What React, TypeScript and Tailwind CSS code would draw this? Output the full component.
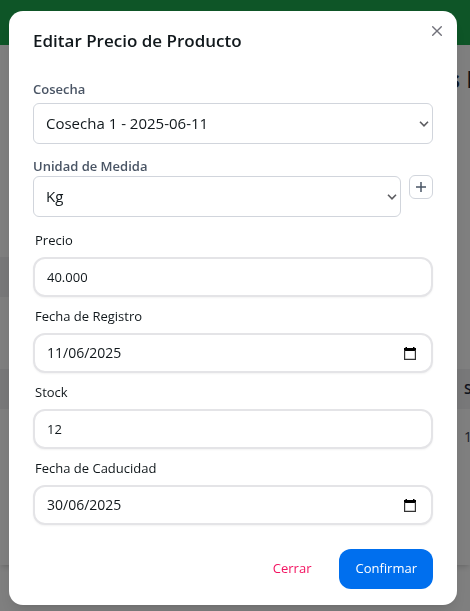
import { useState, type ReactNode } from "react";

const fieldBox =
  "flex h-10 items-center rounded-xl border-2 border-[#e4e4e7] bg-white px-3 shadow-xs";
const selectLabel = "block text-[13px] leading-5 font-semibold text-[#4a5565]";

function CalendarIcon() {
  return (
    <svg width="12" height="13" viewBox="0 0 12 13" aria-hidden="true">
      <path fill="#000" d="M1.5 0h1.5v1h6V0h1.5v1H12v3H0V1h1.5z" />
      <path fill="none" stroke="#333" strokeWidth="1.2" d="M.6 3v9.4h10.8V3" />
    </svg>
  );
}

type SelectBoxProps = { id: string; children: ReactNode };

function SelectBox({ id, children }: SelectBoxProps) {
  return (
    <div className="relative">
      <select
        id={id}
        className="block h-[41px] w-full appearance-none rounded-md border border-[#d1d5dc] bg-white py-2 pr-6 pl-3 text-[15px] text-[#11181c]"
      >
        {children}
      </select>
      <svg
        width="10"
        height="6"
        viewBox="0 0 10 6"
        fill="none"
        stroke="#5c5c60"
        strokeWidth="1.6"
        className="pointer-events-none absolute top-[18px] right-1"
        aria-hidden="true"
      >
        <path d="M1 .8l4 4 4-4" />
      </svg>
    </div>
  );
}

type FieldProps = { id: string; label: string; initial: string; date?: boolean };

function Field({ id, label, initial, date = false }: FieldProps) {
  const [value, setValue] = useState(initial);
  return (
    <div>
      <label htmlFor={id} className="block h-7 pl-0.5 text-[13px] leading-[22px] text-[#11181c]">
        {label}
      </label>
      <div className={fieldBox}>
        <input
          id={id}
          type="text"
          inputMode="numeric"
          value={value}
          onChange={(e) => setValue(e.target.value)}
          className={`w-full min-w-0 bg-transparent leading-5 text-[#11181c] outline-none ${date ? "text-sm" : "text-[13px]"}`}
        />
        {date && (
          <button type="button" aria-label={`Abrir calendario: ${label}`} className="mr-[3px] shrink-0">
            <CalendarIcon />
          </button>
        )}
      </div>
    </div>
  );
}

function PageBehind() {
  return (
    <div aria-hidden="true" className="min-h-screen overflow-hidden bg-white">
      <div className="h-[45px] bg-[#1caa4e]" />
      <div className="h-[520px] bg-white shadow-md">
        <div className="flex h-[212px] justify-end overflow-hidden pt-[18px]">
          <p className="w-[22px] text-2xl font-bold whitespace-nowrap text-[#1e2939]">s N</p>
        </div>
        <div className="h-10 w-1/2 bg-[#f0f0f3]" />
        <div className="mt-[72px] flex h-10 items-center justify-end bg-[#f0f0f3]">
          <p className="w-1.5 text-sm font-semibold text-[#1e2939]">S</p>
        </div>
        <div className="flex h-14 items-center justify-end">
          <p className="w-1.5 text-sm text-[#364153]">1</p>
        </div>
      </div>
    </div>
  );
}

export default function App() {
  return (
    <div className="font-['Open_Sans','Noto_Sans',sans-serif]">
      <PageBehind />
      <div className="fixed inset-0 flex items-start justify-center overflow-y-auto bg-black/50 pt-[11px] pr-1">
        <section
          role="dialog"
          aria-modal="true"
          aria-labelledby="dialog-title"
          className="relative w-full max-w-md rounded-[14px] bg-white shadow-lg"
        >
          <button
            type="button"
            aria-label="Cerrar ventana"
            className="absolute top-1 right-1 p-2 text-[#71717a]"
          >
            <svg width="16" height="16" viewBox="0 0 16 16" fill="none" stroke="currentColor" strokeWidth="1.4" strokeLinecap="round" aria-hidden="true">
              <path d="M3.7 3.7l8.6 8.6M12.3 3.7l-8.6 8.6" />
            </svg>
          </button>
          <header className="px-6 py-4">
            <h1 id="dialog-title" className="text-[17px] leading-7 font-semibold text-[#11181c]">
              Editar Precio de Producto
            </h1>
          </header>
          <form onSubmit={(e) => e.preventDefault()}>
            <div className="px-6 py-2">
              <label htmlFor="cosecha" className={`${selectLabel} mb-1`}>
                Cosecha
              </label>
              <SelectBox id="cosecha">
                <option>Cosecha 1 - 2025-06-11</option>
              </SelectBox>
              <div className="my-3 flex items-center gap-2">
                <div className="min-w-0 flex-1">
                  <label htmlFor="unidad" className={selectLabel}>
                    Unidad de Medida
                  </label>
                  <SelectBox id="unidad">
                    <option>Kg</option>
                  </SelectBox>
                </div>
                <button
                  type="button"
                  aria-label="Agregar unidad de medida"
                  className="flex size-6 items-center justify-center rounded-md border border-[#d1d5dc] text-[#4a5565]"
                >
                  <svg width="12" height="12" viewBox="0 0 12 12" stroke="currentColor" strokeWidth="1.5" aria-hidden="true">
                    <path d="M1 6h10M6 1v10" />
                  </svg>
                </button>
              </div>
              <div className="flex flex-col gap-2">
                <Field id="precio" label="Precio" initial="40.000" />
                <Field id="registro" label="Fecha de Registro" initial="11/06/2025" date />
                <Field id="stock" label="Stock" initial="12" />
                <Field id="caducidad" label="Fecha de Caducidad" initial="30/06/2025" date />
              </div>
            </div>
            <footer className="flex justify-end gap-3 px-6 py-4">
              <button type="button" className="h-10 rounded-xl px-4 text-[13px] text-[#f31260]">
                Cerrar
              </button>
              <button type="submit" className="h-10 rounded-xl bg-[#006fee] px-4 text-[13px] text-white">
                Confirmar
              </button>
            </footer>
          </form>
        </section>
      </div>
    </div>
  );
}
